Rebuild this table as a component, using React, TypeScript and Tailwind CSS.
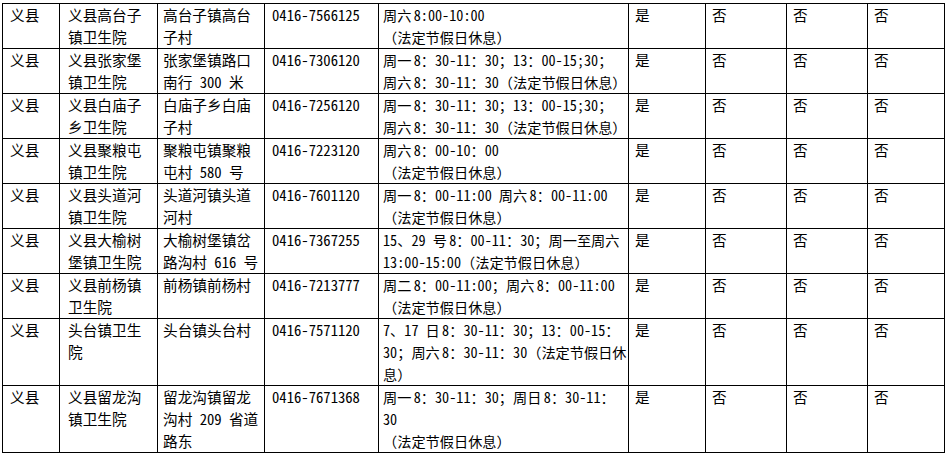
import React from 'react'

// Each cell is a list of already-wrapped lines, so the layout does not depend on font metrics
type Row = string[][]

const sp = '\u2006'

const rows: Row[] = [
  [
    ['义县'],
    ['义县高台子', '镇卫生院'],
    ['高台子镇高台', '子村'],
    ['0416-7566125'],
    [`周六${sp}8:00-10:00`, '（法定节假日休息）'],
  ],
  [
    ['义县'],
    ['义县张家堡', '镇卫生院'],
    ['张家堡镇路口', '南行 300 米'],
    ['0416-7306120'],
    [`周一${sp}8：30-11：30；13：00-15;30；`, `周六${sp}8：30-11：30（法定节假日休息）`],
  ],
  [
    ['义县'],
    ['义县白庙子', '乡卫生院'],
    ['白庙子乡白庙', '子村'],
    ['0416-7256120'],
    [`周一${sp}8：30-11：30；13：00-15;30；`, `周六${sp}8：30-11：30（法定节假日休息）`],
  ],
  [
    ['义县'],
    ['义县聚粮屯', '镇卫生院'],
    ['聚粮屯镇聚粮', '屯村 580 号'],
    ['0416-7223120'],
    [`周六${sp}8：00-10：00`, '（法定节假日休息）'],
  ],
  [
    ['义县'],
    ['义县头道河', '镇卫生院'],
    ['头道河镇头道', '河村'],
    ['0416-7601120'],
    [`周一${sp}8：00-11:00  周六${sp}8：00-11:00`, '（法定节假日休息）'],
  ],
  [
    ['义县'],
    ['义县大榆树', '堡镇卫生院'],
    ['大榆树堡镇岔', '路沟村 616 号'],
    ['0416-7367255'],
    [`15、29 号${sp}8：00-11：30；周一至周六`, '13:00-15:00（法定节假日休息）'],
  ],
  [
    ['义县'],
    ['义县前杨镇', '卫生院'],
    ['前杨镇前杨村'],
    ['0416-7213777'],
    [`周二${sp}8：00-11:00；周六${sp}8：00-11:00`, '（法定节假日休息）'],
  ],
  [
    ['义县'],
    ['头台镇卫生', '院'],
    ['头台镇头台村'],
    ['0416-7571120'],
    [`7、17 日${sp}8：30-11：30；13：00-15：`, `30；周六${sp}8：30-11：30（法定节假日休`, '息）'],
  ],
  [
    ['义县'],
    ['义县留龙沟', '镇卫生院'],
    ['留龙沟镇留龙', '沟村 209 省道', '路东'],
    ['0416-7671368'],
    [`周一${sp}8：30-11：30；周日${sp}8：30-11：`, '30', '（法定节假日休息）'],
  ],
]

const flags = ['是', '否', '否', '否']

const cellClass = [
  'pl-[7px]',
  'pl-[8px]',
  'pl-[5px]',
  'pl-[7px]',
  'pl-[4px] text-[14.2px]',
  'pl-[6px]',
  'pl-[6px]',
  'pl-[6px]',
  'pl-[6px]',
]

export default function App() {
  return (
    <div className="w-[948px] h-[456px] bg-white pt-[3px] pl-[2px] text-black text-[14.67px] leading-[22px] font-['Noto_Sans_Mono_CJK_SC','Noto_Sans_CJK_SC',sans-serif]">
      <table className="table-fixed border-collapse w-[942px]">
        <colgroup>
          <col className="w-[57px]" />
          <col className="w-[98px]" />
          <col className="w-[107px]" />
          <col className="w-[114px]" />
          <col className="w-[250px]" />
          <col className="w-[77px]" />
          <col className="w-[81px]" />
          <col className="w-[81px]" />
          <col className="w-[77px]" />
        </colgroup>
        <tbody>
          {rows.map((row, r) => (
            <tr key={r}>
              {[...row, ...flags.map((f) => [f])].map((lines, c) => (
                <td
                  key={c}
                  className={`border border-black align-top p-0 whitespace-nowrap overflow-hidden ${cellClass[c]}`}
                >
                  {lines.map((l, k) => (
                    <div key={k}>{l}</div>
                  ))}
                </td>
              ))}
            </tr>
          ))}
        </tbody>
      </table>
    </div>
  )
}
